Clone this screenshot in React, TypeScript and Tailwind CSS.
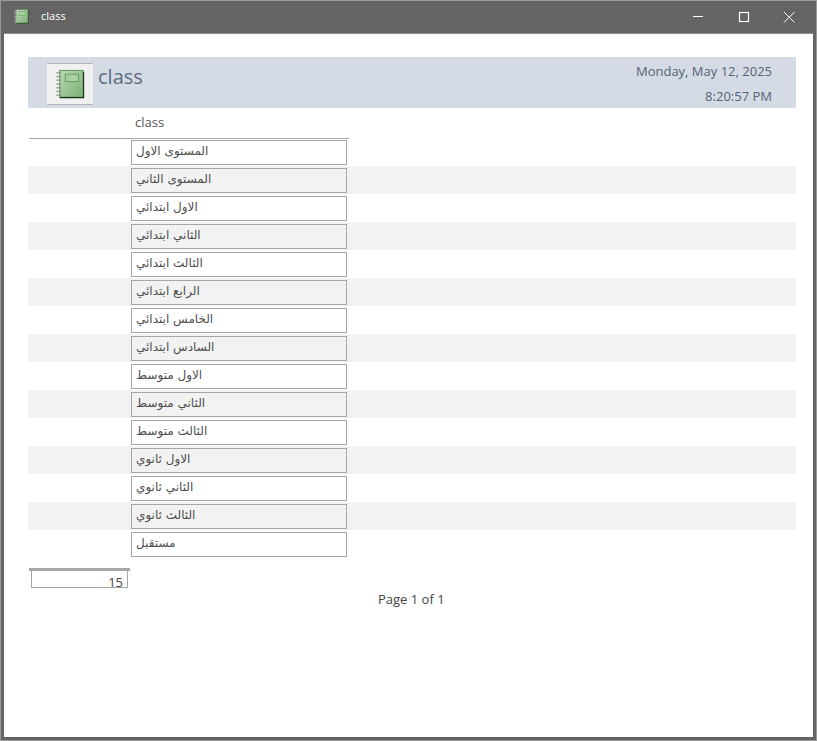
const rows = [
  "المستوى الاول",
  "المستوى الثاني",
  "الاول ابتدائي",
  "الثاني ابتدائي",
  "الثالث ابتدائي",
  "الرابع ابتدائي",
  "الخامس ابتدائي",
  "السادس ابتدائي",
  "الاول متوسط",
  "الثاني متوسط",
  "الثالث متوسط",
  "الاول ثانوي",
  "الثاني ثانوي",
  "الثالث ثانوي",
  "مستقبل",
];

function Notebook({ size, ring, id }: { size: number; ring: string; id: string }) {
  const rings = [4, 8, 12, 16, 20, 24, 28];
  return (
    <svg width={size} height={size} viewBox="0 0 32 32" className="block">
      <defs>
        <linearGradient id={id} x1="0" y1="0" x2="1" y2="1">
          <stop offset="0" stopColor="#bcd9b5" />
          <stop offset="1" stopColor="#7cb075" />
        </linearGradient>
      </defs>
      <rect x="5" y="1.5" width="25" height="28.5" fill={`url(#${id})`} stroke="#5a9555" strokeWidth="1" />
      <path d="M5 30.5H30.5V3" fill="none" stroke="#1c2c1a" strokeWidth="1.2" />
      <rect x="11" y="5.5" width="14" height="8" fill="#aacfa4" stroke="#5f9a5a" strokeWidth="1" />
      {rings.map((y) => (
        <path key={y} d={`M1.5 ${y}h5`} stroke={ring} strokeWidth="1.8" strokeDasharray="1.4 0.6" />
      ))}
    </svg>
  );
}

export default function App() {
  return (
    <div className="w-[817px] h-[741px] flex flex-col bg-[#646464] border border-[#9a9a9a] overflow-hidden font-['Open_Sans','Noto_Sans','DejaVu_Sans',sans-serif]">
      <div className="h-[32px] shrink-0 flex items-center text-white text-[11px]">
        <div className="ml-[13px] mt-[-2px]">
          <Notebook size={15} ring="#f2f2f2" id="nb-small" />
        </div>
        <span className="ml-[12px] mt-[-1px]">class</span>
        <div className="ml-auto flex items-center">
          <svg width="124" height="32" viewBox="0 0 124 32" fill="none" stroke="#fff" strokeWidth="1">
            <path d="M1 15.5H11" />
            <rect x="47.5" y="11.5" width="9" height="9" strokeWidth="1.2" />
            <path d="M92 11L102.5 21.5M102.5 11L92 21.5" />
          </svg>
        </div>
      </div>
      <div className="flex-1 mx-[3px] mb-[3px] border-t border-[#8e8e8e] bg-white pt-[23px] pl-[24px] pr-[17px] text-[#444]">
        <div className="h-[51px] bg-[#d5dbe5] flex pl-[19px] pr-[24px]">
          <div className="mt-[6px] w-[46px] h-[42px] bg-[#f1f1f1] border-y border-[#b3b3b3] flex items-center justify-center">
            <Notebook size={30} ring="#8a8a8a" id="nb-large" />
          </div>
          <div className="ml-[5px] mt-[4px] text-[20px] leading-[32px] text-[#5b6b85]">class</div>
          <div className="ml-auto text-right text-[13px] text-[#556279]">
            <div className="leading-[28px]">Monday, May 12, 2025</div>
            <div className="leading-[22px]">8:20:57 PM</div>
          </div>
        </div>
        <div className="h-[30px] pl-[107px] flex items-end pb-[8px] text-[13px] leading-[16px] text-[#555]">class</div>
        <div className="w-[320px] ml-[1px] border-t border-[#a6a6a6] h-px" />
        <div className="mt-[-1px]">
          {rows.map((r, i) => (
            <div key={r} className={`h-[28px] pl-[103px] pt-[2px] ${i % 2 === 1 ? "bg-[#f2f2f2]" : ""}`}>
              <div dir="rtl" className="w-[216px] h-[25px] border border-[#a6a6a6] text-[12px] leading-[20px] text-[#4d4d4d] flex justify-end px-[4px] font-['DejaVu_Sans',sans-serif]">
                {r}
              </div>
            </div>
          ))}
        </div>
        <div className="mt-[10px] ml-[1px] w-[101px] h-[3px] bg-[#a6a6a6]" />
        <div className="ml-[3px] w-[97px] h-[17px] border border-t-0 border-[#a6a6a6] text-right pr-[4px] text-[13px] leading-[22px] text-[#444]">15</div>
        <div className="mt-[2px] ml-[350px] text-[13px] leading-[18px] text-[#444]">Page 1 of 1</div>
      </div>
    </div>
  );
}
